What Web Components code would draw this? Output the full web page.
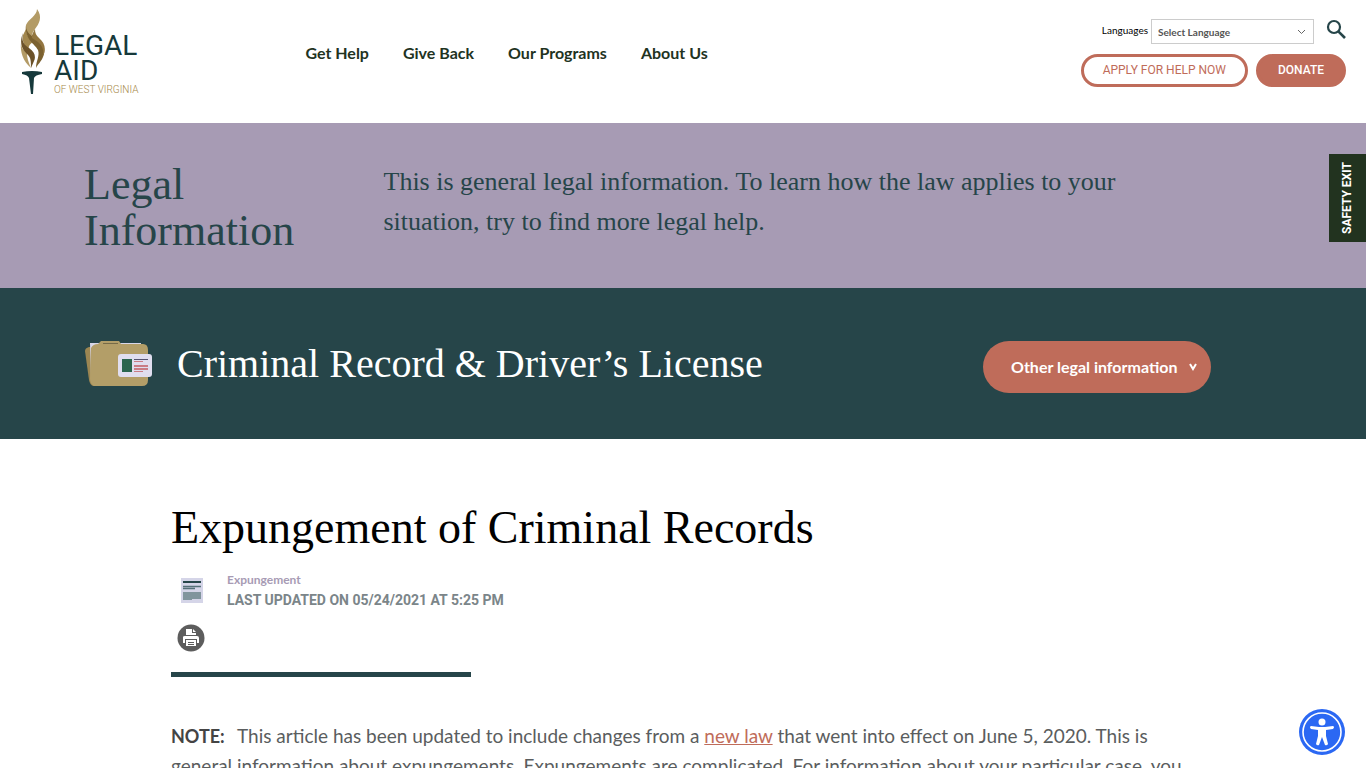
<!DOCTYPE html>
<html lang="en">
<head>
<meta charset="utf-8">
<meta name="viewport" content="width=device-width, initial-scale=1">
<title>Expungement of Criminal Records - Legal Aid of West Virginia</title>
<style>
  :root {
    --teal: #264549; --lilac: #a79bb4; --rust: #bf6c5a; --forest: #22331f;
    --serif: "Liberation Serif", "Times New Roman", serif;
    --sans: Lato, sans-serif;
    --label: Roboto, sans-serif;
  }
  html { scrollbar-width: none; }
  body { margin: 0; background: #fff; font-family: var(--sans); }
</style>
</head>
<body>
<law-page></law-page>
<script>
function element(name, html) {
  const template = document.createElement('template');
  template.innerHTML = '<style>*{box-sizing:border-box}h1,h2,p,ul{margin:0;padding:0;font-weight:400}</style>' + html;
  customElements.define(name, class extends HTMLElement {
    constructor() {
      super();
      this.attachShadow({ mode: 'open' }).append(template.content.cloneNode(true));
    }
  });
}

element('law-logo', `
<style>
  :host { display: block; }
  a { display: flex; gap: 8px; color: #16393b; text-decoration: none; font-family: var(--label); }
  .words { display: flex; flex-direction: column; padding-top: 24px; }
  .big { font-size: 28px; line-height: 25px; font-weight: 400; }
  .small { font-size: 10px; line-height: 14px; font-weight: 300; color: #a58848; }
</style>
<a href="#">
  <svg width="26" height="88" viewBox="0 0 26 88" aria-hidden="true">
    <path fill="#b39b66" d="M17 0C23 8 19 15 15 20C12 24 11 27 12 30C6 27 5 20 6 16C8 10 17 7 17 0Z"/>
    <path fill="#b39b66" d="M1 34C0 43 3 52 11 59C8 52 7 48 7 44C3 41 1 38 1 34Z"/>
    <path fill="#a2874e" d="M6 20C6 25 9 29 13 33C9 36 8 38 9 41C4 38 2 32 3 26Z"/>
    <path fill="#7b6130" d="M6 17C6 24 12 27 18 31C24 36 26 42 23 48C21 53 18 55 16 59C16 52 20 47 18 41C15 35 5 31 6 17Z"/>
    <path fill="#6c5229" d="M3 24C1 32 4 36 9 39C15 43 16 48 14 52L11 59C11 53 11 49 8 46C4 42 -2 36 3 24Z"/>
    <path fill="#937640" d="M15 20C13 24 11 27 12 29L18 33C24 38 24 44 22 48C27 41 25 34 19 29C16 26 15 24 15 20Z"/>
    <path fill="#16393b" d="M2 63Q12 61 22 63V65Q15 66 14 69L13 85H11L9 69Q8 66 2 65Z"/>
  </svg>
  <span class="words"><span class="big">LEGAL</span><span class="big">AID</span><span class="small">OF WEST VIRGINIA</span></span>
</a>`);

element('law-nav', `
<style>
  :host { display: block; }
  nav { display: flex; gap: 34px; }
  a { font-size: 16px; line-height: 24px; font-weight: 700; color: var(--forest); text-decoration: none; white-space: nowrap; }
</style>
<nav aria-label="Main"><a href="#">Get Help</a><a href="#">Give Back</a><a href="#">Our Programs</a><a href="#">About Us</a></nav>`);

element('law-tools', `
<style>
  :host { display: flex; flex-direction: column; align-items: flex-end; gap: 10px; }
  .row { display: flex; align-items: center; }
  label { font-size: 10px; margin-right: 3px; padding-bottom: 3px; color: #000; }
  .pick { display: grid; align-items: center; }
  .pick > * { grid-area: 1 / 1; }
  .pick svg { justify-self: end; margin-right: 8px; pointer-events: none; }
  select { appearance: none; width: 163px; height: 25px; padding: 0 6px; border: 1px solid #ccc; border-radius: 0; background: #fff; color: #555; font: 700 10px var(--sans); }
  button { border: 0; padding: 0; margin-left: 12px; background: none; display: flex; height: 25px; }
  .links { gap: 8px; }
  .links a { height: 33px; border: 3px solid var(--rust); border-radius: 17px; padding: 0 19px; font: 12px/26px var(--label); color: var(--rust); text-decoration: none; }
  .links .full { background: var(--rust); color: #fff; font-weight: 500; }
</style>
<div class="row">
  <label for="lang">Languages</label>
  <span class="pick"><select id="lang"><option>Select Language</option><option>Spanish</option></select>
  <svg width="9" height="6" viewBox="0 0 9 6" fill="none" stroke="#666"><path d="M1 1l3.5 3.5L8 1"/></svg></span>
  <button aria-label="Search"><svg width="20" height="20" viewBox="0 0 20 20" fill="none" stroke="#264549" stroke-width="2.2"><circle cx="8" cy="8" r="6"/><path d="M12.3 12.3L19 19" stroke-width="2.6"/></svg></button>
</div>
<div class="row links"><a href="#">APPLY FOR HELP NOW</a><a class="full" href="#">DONATE</a></div>`);

element('law-header', `
<style>
  :host { display: block; }
  header { display: flex; align-items: flex-start; min-height: 123px; padding: 9px 20px 0; }
  law-nav { margin: 32px auto 0 167px; }
  law-tools { margin-top: 10px; }
</style>
<header><law-logo></law-logo><law-nav></law-nav><law-tools></law-tools></header>`);

element('law-intro', `
<style>
  :host { display: block; background: var(--lilac); color: var(--teal); font-family: var(--serif); }
  .in { display: grid; grid-template-columns: 1fr 3fr; max-width: 1198px; min-height: 165px; margin: auto; padding: 39px 0 34px; }
  h2 { font-size: 44px; line-height: 46px; }
  p { font-size: 26px; line-height: 40px; max-width: 760px; }
</style>
<section class="in"><h2><slot name="title"></slot></h2><p><slot></slot></p></section>`);

element('law-topic', `
<style>
  :host { display: block; background: var(--teal); color: #fff; }
  .in { display: flex; align-items: center; max-width: 1196px; min-height: 151px; margin: auto; padding-right: 70px; }
  h2 { font: 40px/48px var(--serif); margin: 0 auto 0 25px; }
  button { min-width: 228px; height: 52px; border: 0; border-radius: 26px; padding: 0 14px 0 28px; margin-top: 6px; background: var(--rust); color: #fff; font: 700 16px/20px var(--sans); display: flex; align-items: center; justify-content: space-between; }
</style>
<section class="in">
  <svg width="67" height="48" viewBox="0 0 67 48" aria-hidden="true">
    <path fill="#9c8652" d="M0 11Q0 8 4 7H10V46H8Q5 45 4 40Z"/>
    <path fill="#d9d7e8" d="M5 3H56V9H8V40H6Z"/>
    <path fill="#b39e68" d="M6 8Q8 4 13 4L16 1H34L36 4H58Q63 4 63 10V40Q63 46 57 46H9Q5 44 5 39Z"/>
    <path stroke="#776b48" d="M18 3.500H33"/>
    <rect x="33" y="14" width="34" height="23" rx="3" fill="#e0deef"/>
    <path fill="#2a654e" d="M37 19H47V32H37Z"/>
    <path fill="#555370" d="M49 19H63V20H49Z"/>
    <path fill="#c97c85" d="M49 21H58V22H49ZM49 25H63V27H49ZM49 28H63V30H49ZM49 31H58V32H49Z"/>
  </svg>
  <h2><slot></slot></h2>
  <button><span>Other legal information</span>
  <svg width="8" height="8" viewBox="0 0 8 8" fill="none" stroke="#fff" stroke-width="2" aria-hidden="true"><path d="M1 1l3 5l3-5"/></svg></button>
</section>`);

element('law-article', `
<style>
  :host { display: block; }
  article { max-width: 1024px; margin: auto; padding: 60px 0; }
  h1 { font: 46px/58px var(--serif); color: #000; }
  .meta { display: flex; align-items: center; gap: 24px; padding: 13px 0 0 10px; }
  .tag { font-size: 12px; line-height: 20px; font-weight: 700; color: var(--lilac); }
  .date { font: 700 14px/20px var(--label); color: #7b8589; }
  .print { display: block; border: 0; padding: 0; margin: 14px 0 20px 6px; background: none; height: 28px; }
  hr { width: 300px; height: 5px; margin: 0 0 44px; border: 0; background: var(--teal); }
  .body { font-size: 19px; line-height: 30px; color: #5a5d5e; }
  b { margin-right: 8px; color: #444; font-size: 18px; }
  .body a { color: var(--rust); }
</style>
<article>
  <h1>Expungement of Criminal Records</h1>
  <div class="meta">
    <svg width="22" height="25" viewBox="0 0 22 25" aria-hidden="true"><path fill="#d5d5e8" d="M0 0H22V25H0Z"/><path stroke="#264549" stroke-width="2" d="M2 4H20"/><path stroke="#557078" stroke-width="1.500" d="M2 8.500H20M2 10.500H14"/><path fill="#81959d" d="M2 14H20V21H11V22H2Z"/></svg>
    <div><div class="tag">Expungement</div><div class="date">LAST UPDATED ON 05/24/2021 AT 5:25 PM</div></div>
  </div>
  <button class="print" aria-label="Print"><svg width="28" height="28" viewBox="0 0 28 28"><circle cx="14" cy="14" r="13.500" fill="#5d5d5d"/><path fill="#fff" d="M9 5H16L19 8V11H9ZM6 13Q6 12 8 12H20Q22 12 22 14V19H20V15H8V19H6Z"/><path fill="#5d5d5d" d="M16 5V8H19V9H15V5Z"/><path fill="#fff" d="M9 16H19V22H9Z"/><path stroke="#5d5d5d" d="M11 18.500H17M11 20.500H17"/></svg></button>
  <hr>
  <p class="body"><b>NOTE:</b> This article has been updated to include changes from a <a href="#">new law</a> that went into effect on June 5, 2020. This is general information about expungements. Expungements are complicated. For information about your particular case, you</p>
</article>`);

element('law-exit', `
<style>
  :host { position: fixed; right: 0; top: 154px; }
  a { display: block; writing-mode: vertical-rl; rotate: 180deg; padding: 8px 9px; background: var(--forest); color: #fff; font: 700 12px/19px var(--label); text-decoration: none; }
</style>
<a href="#">SAFETY EXIT</a>`);

element('law-access', `
<style>
  :host { position: fixed; right: 21px; bottom: 13px; }
  button { display: block; border: 0; padding: 0; background: none; }
  svg { display: block; }
</style>
<button aria-label="Accessibility menu"><svg width="46" height="46" viewBox="0 0 46 46"><circle cx="23" cy="23" r="23" fill="#2b68f3"/><circle cx="23" cy="23" r="19" fill="none" stroke="#fff" stroke-width="1.600"/><circle cx="23" cy="13" r="3.500" fill="#fff"/><path fill="#fff" d="M12 17L20 18H26L34 17Q36 18 34 20L27 21V27L29 35Q28 37 26 36L23 28L20 36Q18 37 17 35L19 27V21L12 20Q10 18 12 17Z"/></svg></button>`);

element('law-page', `
<style>:host { display: block; }</style>
<law-header></law-header>
<main>
  <law-intro><span slot="title">Legal<br>Information</span>This is general legal information. To learn how the law applies to your situation, try to find more legal help.</law-intro>
  <law-topic>Criminal Record &amp; Driver’s License</law-topic>
  <law-article></law-article>
</main>
<law-exit></law-exit><law-access></law-access>`);
</script>
</body>
</html>
